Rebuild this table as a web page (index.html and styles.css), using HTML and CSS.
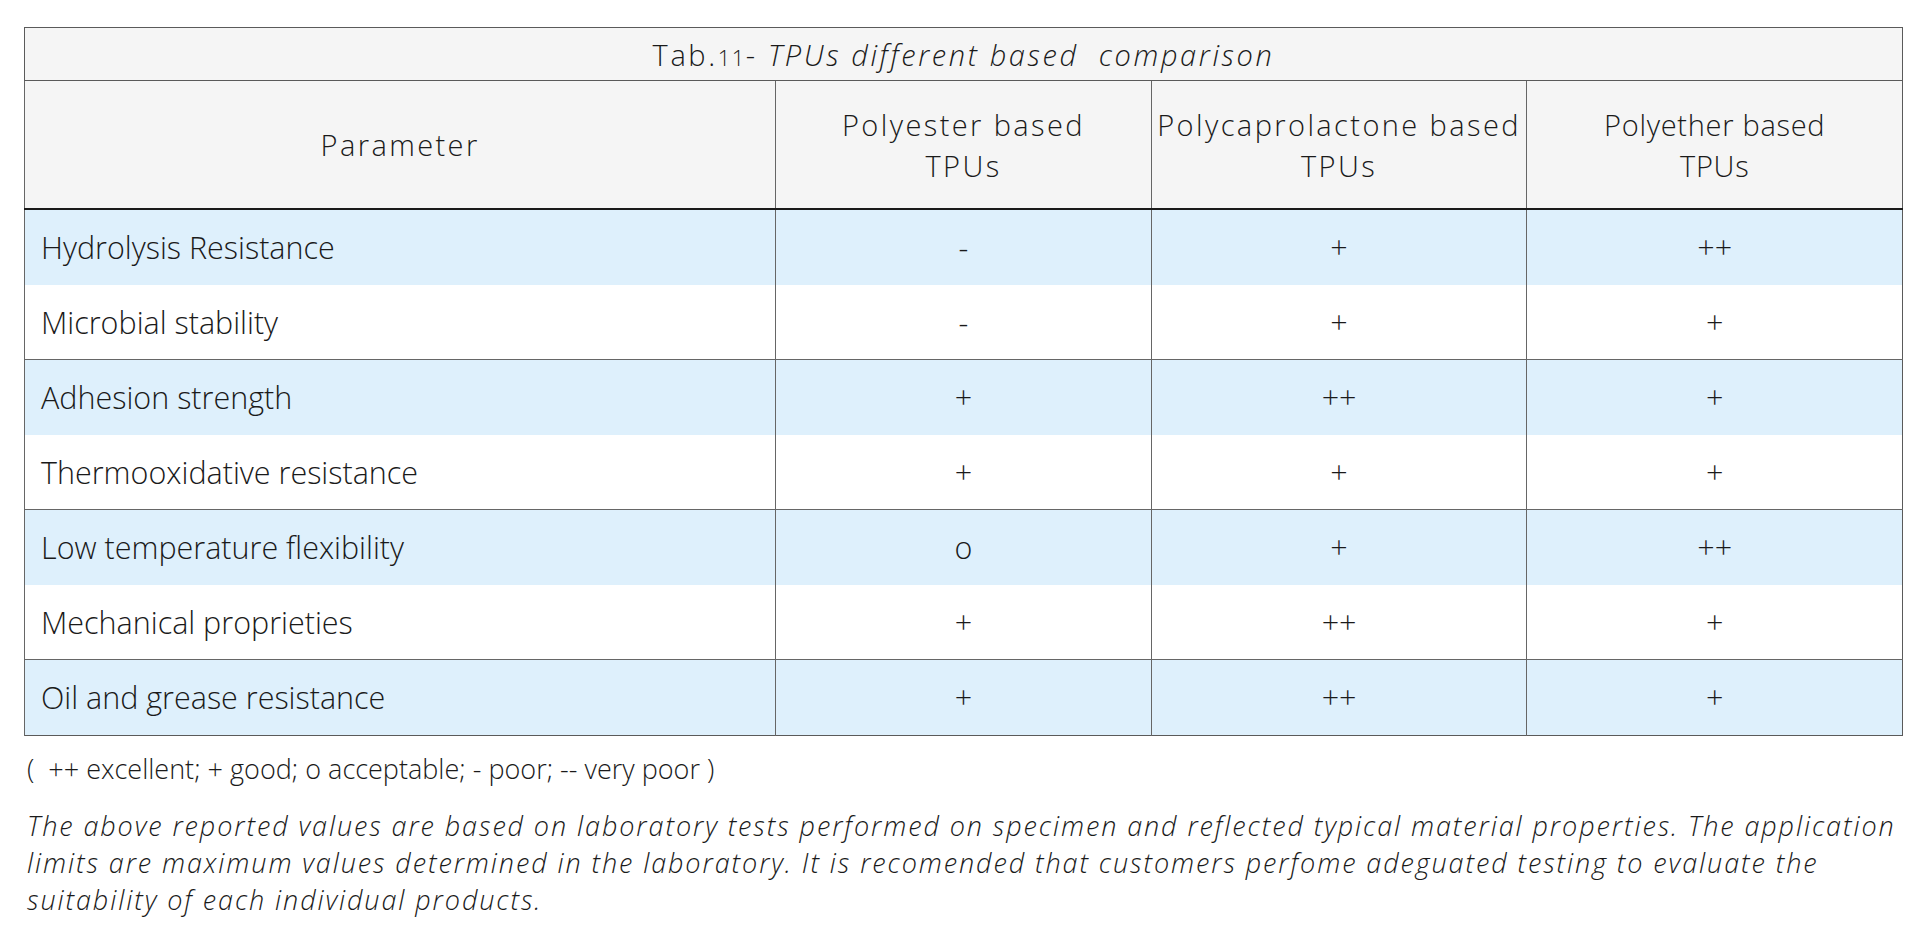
FILE: index.html
```html
<!DOCTYPE html>
<html lang="en">
<head>
<meta charset="utf-8">
<title>TPUs comparison</title>
<link rel="stylesheet" href="styles.css">
</head>
<body>
<main class="page">
  <table class="cmp">
    <colgroup>
      <col class="c-param">
      <col class="c-val">
      <col class="c-val">
      <col class="c-val">
    </colgroup>
    <thead>
      <tr class="title-row">
        <th colspan="4">Tab.<span class="num">11</span>- <em>TPUs different based&nbsp; comparison</em></th>
      </tr>
      <tr class="head-row">
        <th>Parameter</th>
        <th>Polyester based<br>TPUs</th>
        <th>Polycaprolactone based<br>TPUs</th>
        <th class="tight">Polyether based<br>TPUs</th>
      </tr>
    </thead>
    <tbody>
      <tr class="blue"><td>Hydrolysis Resistance</td><td>-</td><td>+</td><td>++</td></tr>
      <tr class="white"><td>Microbial stability</td><td>-</td><td>+</td><td>+</td></tr>
      <tr class="blue"><td>Adhesion strength</td><td>+</td><td>++</td><td>+</td></tr>
      <tr class="white"><td>Thermooxidative resistance</td><td>+</td><td>+</td><td>+</td></tr>
      <tr class="blue"><td>Low temperature flexibility</td><td>o</td><td>+</td><td>++</td></tr>
      <tr class="white"><td>Mechanical proprieties</td><td>+</td><td>++</td><td>+</td></tr>
      <tr class="blue"><td>Oil and grease resistance</td><td>+</td><td>++</td><td>+</td></tr>
    </tbody>
  </table>
  <p class="legend">(&nbsp; ++ excellent; + good; o acceptable; - poor; -- very poor )</p>
  <p class="note">The above reported values are based on laboratory tests performed on specimen and reflected typical material properties. The application limits are maximum values determined in the laboratory. It is recomended that customers perfome adeguated testing to evaluate the suitability of each individual products.</p>
</main>
</body>
</html>
```
FILE: styles.css
```css
html, body {
  margin: 0;
  padding: 0;
  background: #ffffff;
}

body {
  font-family: "Open Sans", "Noto Sans", sans-serif;
  font-weight: 300;
  color: #1a1a1a;
}

.page {
  padding: 27px 17px 0 24px;
}

.cmp {
  width: 100%;
  border-collapse: collapse;
  table-layout: fixed;
  border: 1px solid #5a5a5a;
}

.c-param { width: 40%; }
.c-val { width: 20%; }

.cmp th {
  font-weight: 300;
  background: #f5f5f5;
}

.title-row th {
  height: 52px;
  padding: 0;
  font-size: 29px;
  letter-spacing: 2.6px;
  border-bottom: 1px solid #5a5a5a;
  text-align: center;
  vertical-align: middle;
}

.title-row .num {
  font-size: 22px;
  letter-spacing: 1.5px;
}

.title-row em {
  font-style: italic;
}

.head-row th {
  height: 127px;
  padding: 0;
  font-size: 29px;
  letter-spacing: 2.4px;
  line-height: 41px;
  border-left: 1px solid #666666;
  border-bottom: 2px solid #1a1a1a;
  text-align: center;
  vertical-align: middle;
}

.head-row th.tight {
  letter-spacing: 0.7px;
}

.cmp td {
  height: 74.5px;
  padding: 0;
  font-size: 30.5px;
  text-align: center;
  vertical-align: middle;
  border-left: 1px solid #666666;
}

.cmp td:first-child {
  text-align: left;
  padding-left: 16px;
}

.blue td {
  background: #def0fc;
}

.white td {
  background: #ffffff;
  border-bottom: 1px solid #666666;
}

.legend {
  margin: 16px 0 0 3px;
  font-size: 27px;
  line-height: 34px;
}

.note {
  margin: 21px 0 0 3px;
  font-size: 27px;
  font-style: italic;
  line-height: 37px;
  letter-spacing: 1.9px;
}
```
